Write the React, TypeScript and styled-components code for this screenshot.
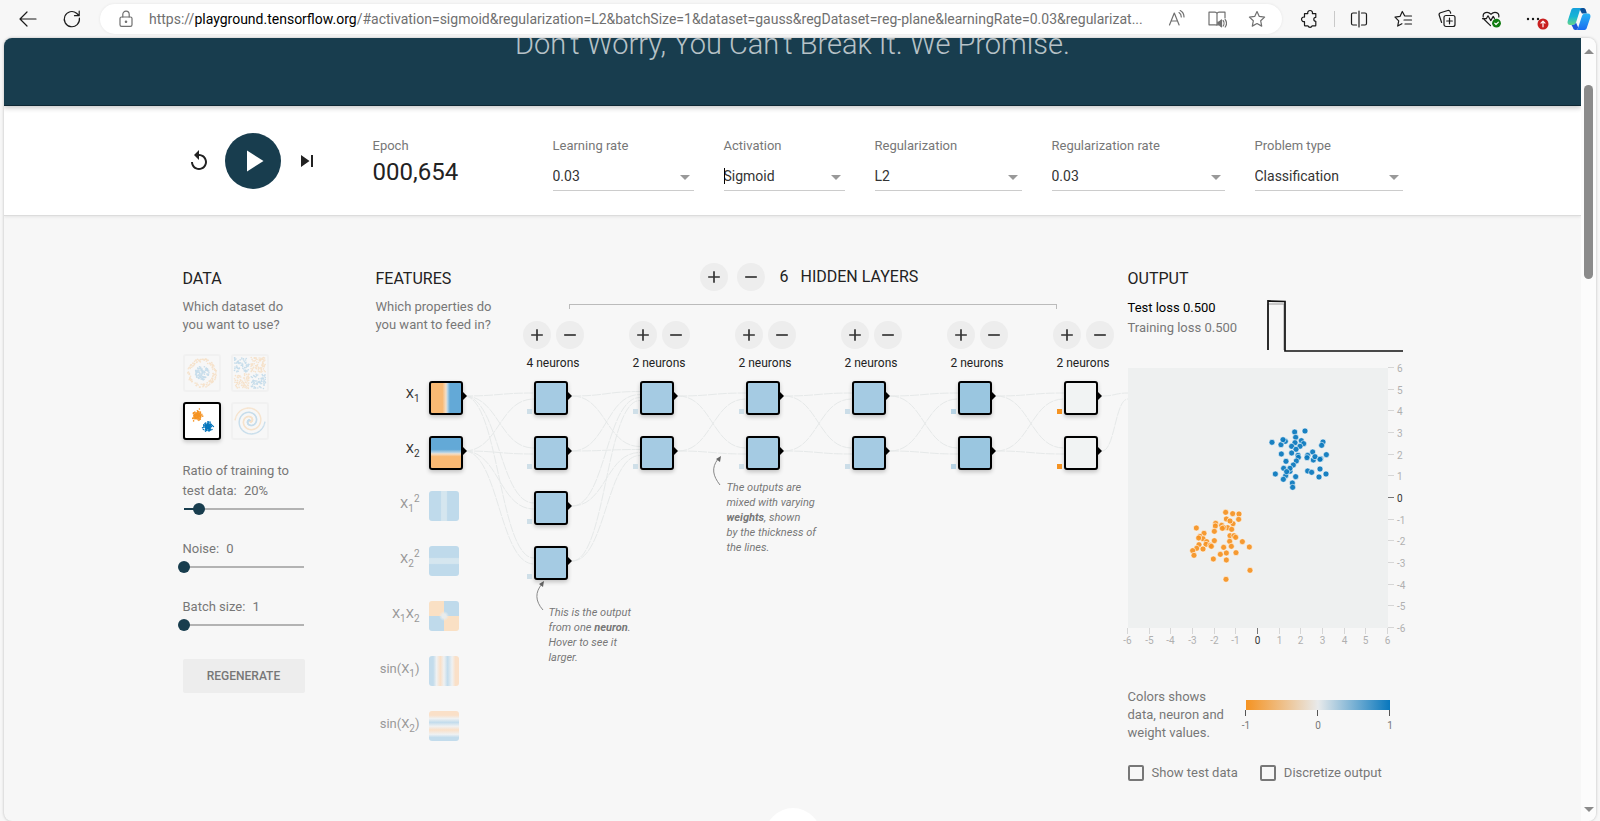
import React from 'react';
import styled, { createGlobalStyle, css } from 'styled-components';

const NAVY = '#183d4e';
const ORANGE = '#f59322';
const BLUE = '#0877bd';

const GlobalStyle = createGlobalStyle`
  * { box-sizing: border-box; }
  body {
    margin: 0;
    background: #f7f7f7;
    color: #222;
    font-family: Roboto, "Liberation Sans", sans-serif;
    font-size: 13px;
    line-height: 18px;
  }
  h1, h2, p { margin: 0; font-weight: 400; }
  button, input, select { font-family: inherit; margin: 0; }
`;

/* ---------- browser frame ---------- */

const Window = styled.div`
  display: flex;
  flex-direction: column;
  height: 100vh;
  overflow: hidden;
`;

const Toolbar = styled.div`
  display: flex;
  align-items: center;
  flex: none;
  height: 38px;
  padding: 0 9px 0 16px;
`;

const ToolButton = styled.button`
  position: relative;
  display: flex;
  align-items: center;
  justify-content: center;
  flex: none;
  width: 24px;
  height: 24px;
  padding: 0;
  border: 0;
  background: none;
  color: #1b1b1b;

  svg { fill: none; stroke: currentColor; stroke-width: 1.2; stroke-linecap: round; stroke-linejoin: round; }
`;

const NavTools = styled.div`
  display: flex;
  gap: 20px;
  margin-right: 16px;
`;

const AddressBar = styled.div`
  display: flex;
  align-items: center;
  flex: 1;
  min-width: 0;
  height: 30px;
  padding: 0 13px 0 14px;
  border-radius: 15px;
  background: #fff;
  box-shadow: 0 0 3px rgba(0, 0, 0, 0.08);

  ${ToolButton} { color: #707070; }
`;

const Url = styled.div`
  flex: 1;
  min-width: 0;
  margin: 0 8px 0 11px;
  overflow: hidden;
  white-space: nowrap;
  font-size: 14px;
  line-height: 20px;
  color: #707070;

  b { font-weight: 400; color: #000; }
`;

const AddressTools = styled.div`
  display: flex;
  gap: 16px;
`;

const BrowserTools = styled.div`
  display: flex;
  align-items: center;
  gap: 20px;
  margin-left: 16px;
`;

const ToolDivider = styled.span`
  width: 1px;
  height: 16px;
  margin: 0 -8px;
  background: #c9c9c9;
`;

const Viewport = styled.div`
  display: flex;
  flex: 1;
  min-height: 0;
  margin: 0 4px;
  border-radius: 8px;
  overflow: hidden;
  box-shadow: 0 0 3px rgba(0, 0, 0, 0.25);
`;

const Page = styled.div`
  flex: 1;
  min-width: 0;
  overflow: hidden;
`;

const ScrollBar = styled.div`
  display: flex;
  flex-direction: column;
  align-items: center;
  width: 15px;
  padding: 11px 0 9px;
  background: #fcfcfc;
`;

const ScrollArrow = styled.span<{ $down?: boolean }>`
  border: 5px solid transparent;
  ${(p) =>
    p.$down
      ? css`margin-top: auto; border-top-color: #8b8b8b; border-bottom: 0;`
      : css`border-bottom-color: #8b8b8b; border-top: 0;`}
`;

const ScrollThumb = styled.span`
  width: 9px;
  height: 194px;
  margin-top: 31px;
  border-radius: 5px;
  background: #8b8b8b;
`;

/* ---------- page header and top controls ---------- */

const Banner = styled.header`
  position: relative;
  display: flow-root;
  height: 68px;
  background: ${NAVY};
  border-bottom: 1px solid #0d2733;
  box-shadow: 0 2px 5px rgba(0, 0, 0, 0.22);
  color: rgba(255, 255, 255, 0.7);
  text-align: center;

  h1 {
    margin-top: -12px;
    font-size: 29px;
    font-weight: 300;
    line-height: 36px;
  }
`;

const Container = styled.div`
  display: flex;
  max-width: 1220px;
  margin: 0 auto;
`;

const ControlBar = styled.div`
  background: #fff;
  border-bottom: 1px solid #dcdcdc;
  box-shadow: 0 1px 3px rgba(0, 0, 0, 0.08);
`;

const ControlRow = styled(Container)`
  height: 109px;
  padding-top: 31px;
`;

const Timeline = styled.div`
  display: flex;
  align-items: center;
  align-self: flex-start;
  gap: 14px;
  width: 190px;
  height: 48px;
  padding-left: 4px;
`;

const IconButton = styled.button`
  display: flex;
  padding: 0;
  border: 0;
  background: none;
  fill: #222;
`;

const PlayButton = styled(IconButton)`
  align-items: center;
  justify-content: center;
  width: 56px;
  height: 56px;
  border-radius: 50%;
  background: ${NAVY};
  fill: #fff;
`;

const Epoch = styled.div`
  width: 180px;
  color: #777;

  output {
    display: block;
    margin-top: 3px;
    font-size: 24px;
    line-height: 28px;
    color: #222;
  }
`;

const Controls = styled.div`
  display: flex;
  flex: 1;
  gap: 30px;
`;

const Control = styled.label<{ $share: number }>`
  flex: ${(p) => p.$share} 1 0;
  color: #777;
`;

const SelectBox = styled.span<{ $caret?: boolean }>`
  position: relative;
  display: block;
  margin-top: 9px;

  &::after {
    content: "";
    position: absolute;
    right: 4px;
    top: 11px;
    border: 5px solid transparent;
    border-top-color: #999;
    border-bottom: 0;
  }
  ${(p) =>
    p.$caret &&
    css`
      &::before {
        content: "";
        position: absolute;
        left: 0;
        top: 4px;
        width: 1px;
        height: 16px;
        background: #000;
      }
    `}
`;

const Select = styled.select`
  display: block;
  width: 100%;
  height: 27px;
  padding: 0 20px 2px 0;
  border: 0;
  border-bottom: 1px solid #ccc;
  border-radius: 0;
  background: none;
  appearance: none;
  font-size: 14px;
  color: #333;
`;

/* ---------- main columns ---------- */

const Main = styled(Container)`
  padding-top: 47px;
`;

const Column = styled.section`
  padding-top: 6px;
`;

const Heading = styled.h2`
  font-size: 16px;
  line-height: 20px;
  text-transform: uppercase;
`;

const Intro = styled.p`
  max-width: 120px;
  margin-top: 9px;
  color: #777;
`;

const DataColumn = styled(Column)`
  width: 122px;
  margin-right: 71px;
  color: #777;

  ${Heading} { color: #222; }
`;

const Datasets = styled.div`
  display: grid;
  grid-template-columns: 38px 38px;
  gap: 10px;
  margin: 20px 0 21px;
`;

const Dataset = styled.button<{ $active?: boolean }>`
  display: block;
  height: 38px;
  padding: 0;
  border: 2px solid ${(p) => (p.$active ? '#000' : '#f1f1f1')};
  border-radius: 3px;
  background: ${(p) => (p.$active ? '#fff' : '#f7f7f7')};
  box-shadow: ${(p) => (p.$active ? '0 2px 4px rgba(0,0,0,0.2)' : 'none')};

  svg { display: block; opacity: ${(p) => (p.$active ? 1 : 0.2)}; }
`;

const SliderField = styled.label`
  display: block;
  margin-bottom: 22px;
  line-height: 20px;
`;

const SliderValue = styled.span`
  margin-left: 4px;
`;

const Slider = styled.input<{ $fill: number }>`
  display: block;
  width: 132px;
  height: 16px;
  margin-left: -5px;
  background: linear-gradient(to right, ${NAVY} ${(p) => p.$fill}%, #b3b3b3 ${(p) => p.$fill}%) center / 120px 2px no-repeat;
  appearance: none;

  &::-webkit-slider-thumb {
    width: 12px;
    height: 12px;
    border-radius: 50%;
    background: ${NAVY};
    appearance: none;
  }
`;

const Regenerate = styled.button`
  display: block;
  width: 100%;
  height: 34px;
  margin-top: 26px;
  border: 0;
  border-radius: 2px;
  background: #ededed;
  font-size: 12px;
  font-weight: 500;
  color: #777;
`;

const Network = styled.section`
  position: relative;
  display: flex;
  flex: none;
  margin-right: 14px;
`;

const Links = styled.svg`
  position: absolute;
  left: 0;
  top: 0;
  overflow: visible;
  pointer-events: none;
  fill: none;
`;

const Features = styled(Column)`
  width: 147px;
`;

const FeatureList = styled.div`
  display: flex;
  flex-direction: column;
  gap: 21px;
  margin-top: 47px;
`;

const Feature = styled.div<{ $active?: boolean }>`
  display: flex;
  align-items: flex-start;
  height: 34px;
  color: ${(p) => (p.$active ? '#333' : '#999')};

  span { width: 44px; margin: 4px 9px 0 0; text-align: right; white-space: nowrap; }
  sub, sup { font-size: 10px; line-height: 0; }
  sub { vertical-align: -4px; }
  sup { vertical-align: 6px; }
`;

const FeatureTile = styled.button<{ $fill: string }>`
  width: 30px;
  height: 30px;
  padding: 0;
  border: 0;
  border-radius: 3px;
  background: ${(p) => p.$fill};
`;

const Node = styled.button<{ $fill: string; $bias?: string }>`
  position: relative;
  display: block;
  width: 34px;
  height: 34px;
  padding: 0;
  border: 2px solid #000;
  border-radius: 3px;
  background: ${(p) => p.$fill} padding-box;
  box-shadow: 0 2px 4px rgba(0, 0, 0, 0.22);

  &::after {
    content: "";
    position: absolute;
    left: 32px;
    top: 9px;
    border: 4px solid transparent;
    border-left: 4px solid #000;
    border-right: 0;
  }
  ${(p) =>
    p.$bias &&
    css`
      &::before {
        content: "";
        position: absolute;
        left: -9px;
        top: 26px;
        width: 5px;
        height: 5px;
        background: ${p.$bias};
      }
    `}
`;

const Hidden = styled.div`
  width: 591px;
`;

const LayerTitle = styled.div`
  display: flex;
  align-items: center;
  padding-left: 177px;

  ${Heading}:first-of-type { margin-left: 15px; }
  ${Heading} + ${Heading} { margin-left: 12px; }
`;

const RoundButton = styled.button`
  display: flex;
  align-items: center;
  justify-content: center;
  width: 28px;
  height: 28px;
  padding: 0;
  border: 0;
  border-radius: 50%;
  background: #ededed;
  fill: #333;

  & + & { margin-left: 9px; }
`;

const Bracket = styled.div`
  height: 5px;
  margin: 13px 57px 12px 46px;
  border: 1px solid #bbb;
  border-bottom: 0;
`;

const Layers = styled.div`
  display: flex;
  justify-content: space-between;
`;

const Layer = styled.div`
  width: 61px;

  p { margin: 7px 0 11px; font-size: 12px; line-height: 14px; text-align: center; }
`;

const LayerButtons = styled.div`
  display: flex;

  ${RoundButton} + ${RoundButton} { margin-left: 5px; }
`;

const Nodes = styled.div`
  display: flex;
  flex-direction: column;
  gap: 21px;
  padding-left: 11px;
`;

const Callout = styled.p<{ $x: number; $y: number; $w: number }>`
  position: absolute;
  left: ${(p) => p.$x}px;
  top: ${(p) => p.$y}px;
  width: ${(p) => p.$w}px;
  font-size: 11px;
  font-style: italic;
  line-height: 15px;
  color: #777;
`;

const OutputColumn = styled(Column)`
  flex: 1;
  min-width: 275px;
  color: #777;

  ${Heading} { color: #222; }
`;

const LossRow = styled.div`
  display: flex;
  justify-content: space-between;
  margin: 9px 0 16px;
  line-height: 20px;

  p:first-child { color: #000; }
  svg { display: block; }
`;

const Plot = styled.svg`
  display: block;
  overflow: visible;
  font-size: 10px;
  fill: #b0b0b0;
`;

const Legend = styled.div`
  display: flex;
  margin-top: 38px;

  p { width: 112px; }
  svg { display: block; margin-top: 12px; font-size: 10px; fill: #777; }
`;

const Options = styled.div`
  display: flex;
  gap: 22px;
  margin-top: 22px;
`;

const Option = styled.label`
  display: flex;
  align-items: center;
  gap: 8px;
  white-space: nowrap;
`;

const Checkbox = styled.input`
  width: 16px;
  height: 16px;
  border: 2px solid #777;
  border-radius: 2px;
  appearance: none;
`;

const More = styled.button`
  display: flex;
  align-items: center;
  justify-content: center;
  width: 56px;
  height: 56px;
  margin: 26px auto 0;
  border: 0;
  border-radius: 50%;
  background: #fff;
  fill: #999;
`;

/* ---------- data ---------- */

function seeded(seed: number) {
  let s = seed;
  return () => {
    s = (s * 16807) % 2147483647;
    return s / 2147483647;
  };
}

type Dot = { x: number; y: number; c: string };

function circleDots(): Dot[] {
  const r = seeded(7);
  return Array.from({ length: 230 }, (_, i) => {
    const inner = i < 100;
    const d = inner ? Math.sqrt(r()) * 7 : 11 + r() * 3.5;
    const a = r() * Math.PI * 2;
    return { x: 17 + d * Math.cos(a), y: 17 + d * Math.sin(a), c: inner ? BLUE : ORANGE };
  });
}

function xorDots(): Dot[] {
  const r = seeded(11);
  return Array.from({ length: 300 }, () => {
    const x = (r() - 0.5) * 29;
    const y = (r() - 0.5) * 29;
    return { x: 17 + x + Math.sign(x), y: 17 + y + Math.sign(y), c: x * y > 0 ? BLUE : ORANGE };
  });
}

function gaussDots(): Dot[] {
  const r = seeded(5);
  const g = () => (r() + r() + r() - 1.5) * 4.6;
  return Array.from({ length: 200 }, (_, i) =>
    i % 2 ? { x: 12.5 + g(), y: 11.5 + g(), c: ORANGE } : { x: 23 + g(), y: 23 + g(), c: BLUE },
  );
}

function spiralDots(): Dot[] {
  return Array.from({ length: 240 }, (_, i) => {
    const k = Math.floor(i / 2) / 120;
    const a = 1.75 * k * 2 * Math.PI + (i % 2 ? Math.PI : 0);
    return { x: 17 + 15 * k * Math.sin(a), y: 17 + 15 * k * Math.cos(a), c: i % 2 ? BLUE : ORANGE };
  });
}

const DATASETS = [
  { name: 'Circle', dots: circleDots() },
  { name: 'Exclusive or', dots: xorDots() },
  { name: 'Gaussian', dots: gaussDots(), active: true },
  { name: 'Spiral', dots: spiralDots() },
];

const CONTROLS = [
  { label: 'Learning rate', value: '0.03', share: 141 },
  { label: 'Activation', value: 'Sigmoid', share: 121, caret: true },
  { label: 'Regularization', value: 'L2', share: 147 },
  { label: 'Regularization rate', value: '0.03', share: 173 },
  { label: 'Problem type', value: 'Classification', share: 148 },
];

const PALE_BLUE = '#bfdaeb';
const PALE_ORANGE = '#fae0c4';

const FEATURES: { name: string; label: React.ReactNode; fill: string; active?: boolean }[] = [
  { name: 'X1', label: <>X<sub>1</sub></>, active: true, fill: 'linear-gradient(to right, #f9b973 38%, #f3dfc9 50%, #b5d3e6 55%, #63a9d7 63%)' },
  { name: 'X2', label: <>X<sub>2</sub></>, active: true, fill: 'linear-gradient(to bottom, #63a9d7 38%, #b5d3e6 48%, #f3dfc9 53%, #f9b973 62%)' },
  { name: 'X1 squared', label: <>X<sub>1</sub><sup>2</sup></>, fill: `linear-gradient(to right, ${PALE_BLUE} 38%, #d5e6ef 42% 58%, ${PALE_BLUE} 62%)` },
  { name: 'X2 squared', label: <>X<sub>2</sub><sup>2</sup></>, fill: `linear-gradient(to bottom, ${PALE_BLUE} 38%, #d5e6ef 42% 58%, ${PALE_BLUE} 62%)` },
  { name: 'X1 times X2', label: <>X<sub>1</sub>X<sub>2</sub></>, fill: `radial-gradient(circle, #e9ecec 2px, transparent 5px), conic-gradient(${PALE_BLUE} 25%, ${PALE_ORANGE} 25% 50%, ${PALE_BLUE} 50% 75%, ${PALE_ORANGE} 75%)` },
  { name: 'sin of X1', label: <>sin(X<sub>1</sub>)</>, fill: 'linear-gradient(to right, #c3dcec 14%, #eff1f2 25%, #fae0c8 38%, #eff1f2 50%, #c3dcec 62%, #eff1f2 77%, #fae0c8 88%)' },
  { name: 'sin of X2', label: <>sin(X<sub>2</sub>)</>, fill: 'linear-gradient(to bottom, #fae0c8 14%, #eff1f2 25%, #c3dcec 38%, #eff1f2 51%, #fae0c8 63%, #eff1f2 78%, #c3dcec 88%)' },
];

const LAYERS = [
  { count: 4, fill: '#a5cbe3', bias: '#cfdfe8' },
  { count: 2, fill: '#a5cbe3', bias: '#cfdfe8' },
  { count: 2, fill: '#a5cbe3', bias: '#cfdfe8' },
  { count: 2, fill: '#a5cbe3', bias: '#cbdde8' },
  { count: 2, fill: '#9ac6e0', bias: '#b7d3e4' },
  { count: 2, fill: '#f1f3f3', bias: ORANGE },
];

/* Curves run from the right side of each node to the left side of the next layer. */
const NODE_PITCH = 55;
const FIRST_NODE_Y = 133;
const LAYER_PITCH = 106;
const layerX = (i: number) => 158 + i * LAYER_PITCH;

const LINKS: string[] = [];
[2, ...LAYERS.map((l) => l.count)].forEach((count, i) => {
  const startX = i === 0 ? 88 : layerX(i - 1) + 38;
  const last = i === LAYERS.length;
  const endX = last ? 752 : layerX(i);
  const targets = last ? 1 : LAYERS[i].count;
  for (let s = 0; s < count; s++) {
    for (let t = 0; t < targets; t++) {
      const y1 = FIRST_NODE_Y + s * NODE_PITCH;
      const y2 = FIRST_NODE_Y + t * NODE_PITCH + ((s - (count - 1) / 2) / count) * 12;
      const mid = (startX + endX) / 2;
      LINKS.push(`M${startX} ${y1}C${mid} ${y1} ${mid} ${y2} ${endX} ${y2}`);
    }
  }
});

/* Sample positions on a 780 x 780 plot area. */
const BLUE_POINTS = [
  [432, 223], [459, 230], [472, 220], [465, 215], [500, 192], [531, 189], [503, 208], [520, 218], [527, 227], [501, 224],
  [516, 235], [491, 235], [504, 244], [491, 255], [510, 262], [511, 268], [505, 279], [496, 291], [474, 280], [486, 310],
  [486, 301], [473, 323], [467, 301], [476, 311], [442, 318], [466, 334], [503, 326], [493, 345], [494, 358], [585, 222],
  [581, 232], [595, 260], [554, 252], [539, 262], [537, 269], [556, 276], [561, 266], [578, 272], [576, 274], [576, 303],
  [539, 309], [551, 313], [573, 327], [594, 318], [460, 258],
];
const ORANGE_POINTS = [
  [293, 433], [314, 437], [333, 438], [332, 454], [295, 453], [315, 467], [306, 459], [263, 466], [262, 474], [281, 472],
  [299, 479], [287, 479], [283, 481], [311, 484], [205, 480], [228, 496], [259, 490], [216, 505], [225, 512], [212, 510],
  [306, 503], [318, 503], [323, 508], [305, 520], [343, 521], [259, 518], [236, 521], [234, 529], [247, 532], [250, 535],
  [213, 530], [206, 541], [194, 548], [198, 562], [225, 543], [287, 538], [310, 535], [364, 537], [324, 554], [295, 555],
  [277, 559], [256, 573], [295, 576], [366, 607], [294, 634],
];

const TICKS = Array.from({ length: 13 }, (_, i) => i - 6);

/* ---------- drawings ---------- */

const Plus = () => (
  <svg width="20" height="20" viewBox="0 0 24 24"><path d="M19 13h-6v6h-2v-6H5v-2h6V5h2v6h6v2z" /></svg>
);
const Minus = () => (
  <svg width="20" height="20" viewBox="0 0 24 24"><path d="M19 13H5v-2h14v2z" /></svg>
);

const STAR = 'M10 2.500l2.300 4.900 5.300.7-3.900 3.700 1 5.300-4.700-2.600-4.700 2.600 1-5.300L2.400 8.100l5.300-.7z';

function Icon({ children, size = 20 }: { children: React.ReactNode; size?: number }) {
  return <svg width={size} height={size} viewBox="0 0 20 20">{children}</svg>;
}

function BrowserToolbar() {
  return (
    <Toolbar>
      <NavTools>
        <ToolButton aria-label="Back"><Icon><path d="M18 10H2.500M9 3L2 10l7 7" /></Icon></ToolButton>
        <ToolButton aria-label="Refresh"><Icon><path d="M17.400 9.200A7.600 7.600 0 1 1 14.600 4.200L17 6.500M17.200 2v4.700h-4.700" /></Icon></ToolButton>
      </NavTools>
      <AddressBar>
        <ToolButton aria-label="Site information">
          <Icon><rect x="4" y="8" width="12" height="9.4" rx="1.6" /><path d="M6.800 8V5.400a3.200 3.200 0 0 1 6.400 0V8" /><circle cx="10" cy="12.7" r=".7" fill="currentColor" /></Icon>
        </ToolButton>
        <Url>
          https://<b>playground.tensorflow.org</b>/#activation=sigmoid&amp;regularization=L2&amp;batchSize=1&amp;dataset=gauss&amp;regDataset=reg-plane&amp;learningRate=0.03&amp;regularizat...
        </Url>
        <AddressTools>
          <ToolButton aria-label="Read aloud">
            <Icon><path d="M2.500 16L7.300 4l4.800 12M4.200 12h6.200M12 3.600a5 5 0 0 1 2.300 4.400M13.200 1.600A7.400 7.400 0 0 1 17 8" /></Icon>
          </ToolButton>
          <ToolButton aria-label="Immersive reader">
            <Icon><path d="M10 4.400V16M10 4.400C9.600 3.600 9 3.200 8 3.200H2v12.600h6.200c1 0 1.800.4 1.800.4M10 4.400c.4-.8 1-1.200 2-1.200h6V9M16.200 11.600c1 1.300 1 4 0 5.400M18.200 10.600c1.600 2.200 1.600 5.200 0 7.400" /><path d="M14.500 11v6.800l-2.300-2h-1.400v-2.800h1.400z" fill="currentColor" /></Icon>
          </ToolButton>
          <ToolButton aria-label="Add to favorites"><Icon><path d={STAR} /></Icon></ToolButton>
        </AddressTools>
      </AddressBar>
      <BrowserTools>
        <ToolButton aria-label="Extensions">
          <Icon><path d="M4.500 4.600h3.300a2.400 2.400 0 1 1 4.600 0h3.400v3.700a2 2 0 0 0 0 4v3.900c0 .4-.2.600-.6.600h-3a2.300 2.300 0 0 1-4.300 0H5.100c-.4 0-.6-.2-.6-.6v-3.700a2.300 2.300 0 1 1 0-4.400z" /></Icon>
        </ToolButton>
        <ToolDivider />
        <ToolButton aria-label="Split screen">
          <Icon><path d="M10 2v16M7.500 4H4a1.500 1.500 0 0 0-1.500 1.500v9A1.500 1.500 0 0 0 4 16h3.500M12.500 4H16a1.500 1.500 0 0 1 1.500 1.500v9A1.500 1.500 0 0 1 16 16h-3.500" /></Icon>
        </ToolButton>
        <ToolButton aria-label="Favorites">
          <Icon><path d="M11.600 6.800L9.300 2.500 7 7.400l-5 .7 3.700 3.700-1 5.300 4.200-2.400M12 7h6.500M11 11h7.500M12 15h6.500" /></Icon>
        </ToolButton>
        <ToolButton aria-label="Collections">
          <Icon><rect x="7" y="6.500" width="11" height="11" rx="2" /><path d="M12.500 9.200v5.600M9.700 12h5.600M4.600 13.500L2.200 6.200A2 2 0 0 1 3.500 3.700l7.300-2.200a2 2 0 0 1 2.500 1.400l.4 1.300" /></Icon>
        </ToolButton>
        <ToolButton aria-label="Browser essentials">
          <Icon>
            <path d="M3 10.200L9.500 16.600M2.200 8C1.500 3.500 6.500 1.800 10 5.200c3.500-3.400 8.500-1.700 7.800 2.800M1.500 9.700h3.800l1.700-2.900 2.800 4.800 2.400-4.200 1.200 2" />
            <circle cx="15.500" cy="14.200" r="4.400" fill="#107c10" stroke="none" /><path d="M13.700 14.200l1.300 1.300 2.400-2.400" stroke="#fff" />
          </Icon>
        </ToolButton>
        <ToolButton aria-label="Settings and more">
          <svg width="24" height="24" viewBox="0 0 24 24" overflow="visible">
            <path d="M5 12h0M10 12h0M15 12h0" strokeWidth="2.400" />
            <circle cx="20" cy="17" r="5.500" fill="#c92020" stroke="none" /><path d="M20 19.800v-5.400M18 16.200l2-2 2 2" stroke="#fff" />
          </svg>
        </ToolButton>
        <ToolButton aria-label="Copilot">
          <svg width="24" height="24" viewBox="0 0 24 24">
            <defs>
              <linearGradient id="cpA" x1="0" y1="0" x2="0" y2="1"><stop offset="0" stopColor="#16a0dc" /><stop offset=".5" stopColor="#16b5d5" /><stop offset="1" stopColor="#63d48c" /></linearGradient>
              <linearGradient id="cpB" x1="0" y1="0" x2="0" y2="1"><stop offset="0" stopColor="#27b4f5" /><stop offset="1" stopColor="#1a6cf0" /></linearGradient>
            </defs>
            <g style={{ stroke: 'none' }}>
              <path d="M12 1h4.500c1.400 0 2 1 2.400 2.200l1 3.300h-5z" fill="#0b4e97" />
              <path d="M6.500 1h9c-1.500 0-2.200 1-2.700 2.600L9.200 15c-.6 2-1.500 3-3.600 3H3.200C.8 18 .1 16.200.7 14L4 3.800C4.500 2 5.200 1 6.500 1z" fill="url(#cpA)" />
              <path d="M4.500 18h1.100c1.800 0 2.800-.8 3.400-2.400l2.200 4.800C10.500 22.300 9.800 23 8.500 23c-1.500 0-2.100-1-2.500-2.300z" fill="#1b58d8" />
              <path d="M17.500 23h-9c1.500 0 2.200-1 2.700-2.600L14.800 9.500c.6-2 1.500-3 3.600-3h2.400c2.400 0 3.100 1.800 2.500 4L20 20.200c-.5 1.800-1.200 2.800-2.500 2.800z" fill="url(#cpB)" />
            </g>
          </svg>
        </ToolButton>
      </BrowserTools>
    </Toolbar>
  );
}

function LossChart() {
  return (
    <svg width="136" height="54" viewBox="0 0 136 54" fill="none" role="img" aria-label="Loss over time">
      <path d="M1 52V6h16v46" stroke="#999" />
      <path d="M1 52V3l17 .500V53h118" stroke="#111" strokeWidth="1.700" />
    </svg>
  );
}

function OutputPlot() {
  return (
    <Plot width="275" height="282" role="img" aria-label="Decision boundary">
      <rect width="260" height="260" fill="#eef0f0" />
      {TICKS.map((t) => {
        const p = Math.round(130 + (t * 260) / 12) - 0.5;
        const stroke = t === 0 ? '#777' : '#d6d6d6';
        const fill = t === 0 ? '#333' : undefined;
        return (
          <g key={t}>
            <path d={`M${p} 260v6M260 ${p}h6`} stroke={stroke} />
            <text x={p} y="276" textAnchor="middle" fill={fill}>{t}</text>
            <text x="269" y={p + 4} fill={fill}>{t === 0 ? 0 : -t}</text>
          </g>
        );
      })}
      <g transform="scale(0.33333)" stroke="#fff" strokeWidth="2" strokeOpacity="0.9" fillOpacity="0.92">
        {BLUE_POINTS.map(([x, y], i) => <circle key={i} cx={x} cy={y} r="9" fill={BLUE} />)}
        {ORANGE_POINTS.map(([x, y], i) => <circle key={i} cx={x} cy={y} r="9" fill={ORANGE} />)}
      </g>
    </Plot>
  );
}

function ColorScale() {
  return (
    <svg width="163" height="34" viewBox="0 0 163 34" role="img" aria-label="Color scale">
      <defs>
        <linearGradient id="scale"><stop offset="0" stopColor={ORANGE} /><stop offset=".5" stopColor="#e8eaeb" /><stop offset="1" stopColor={BLUE} /></linearGradient>
      </defs>
      <rect x="6" width="144" height="10" fill="url(#scale)" />
      {[-1, 0, 1].map((v) => (
        <g key={v}>
          <path d={`M${77.5 + v * 72} 10v6`} stroke="#555" />
          <text x={78 + v * 72} y="29" textAnchor="middle">{v}</text>
        </g>
      ))}
    </svg>
  );
}

/* ---------- page ---------- */

export default function App() {
  return (
    <Window>
      <GlobalStyle />
      <BrowserToolbar />
      <Viewport>
        <Page>
          <Banner><h1>Don’t Worry, You Can’t Break It. We Promise.</h1></Banner>
          <ControlBar>
            <ControlRow>
              <Timeline>
                <IconButton aria-label="Reset">
                  <svg width="24" height="24" viewBox="0 0 24 24"><path d="M12 5V1L7 6l5 5V7c3.310 0 6 2.690 6 6s-2.690 6-6 6-6-2.690-6-6H4c0 4.420 3.580 8 8 8s8-3.580 8-8-3.580-8-8-8z" /></svg>
                </IconButton>
                <PlayButton aria-label="Play">
                  <svg width="36" height="36" viewBox="0 0 24 24"><path d="M8 5v14l11-7z" /></svg>
                </PlayButton>
                <IconButton aria-label="Step">
                  <svg width="24" height="24" viewBox="0 0 24 24"><path d="M6 18l8.500-6L6 6v12zM16 6v12h2V6h-2z" /></svg>
                </IconButton>
              </Timeline>
              <Epoch>Epoch<output>000,654</output></Epoch>
              <Controls>
                {CONTROLS.map((c) => (
                  <Control key={c.label} $share={c.share}>
                    {c.label}
                    <SelectBox $caret={c.caret}>
                      <Select defaultValue={c.value}><option>{c.value}</option></Select>
                    </SelectBox>
                  </Control>
                ))}
              </Controls>
            </ControlRow>
          </ControlBar>

          <Main as="main">
            <DataColumn>
              <Heading>Data</Heading>
              <Intro>Which dataset do<br />you want to use?</Intro>
              <Datasets>
                {DATASETS.map((d) => (
                  <Dataset key={d.name} aria-label={d.name} $active={d.active}>
                    <svg width="34" height="34">
                      {d.dots.map((p, i) => <circle key={i} cx={p.x} cy={p.y} r=".8" fill={p.c} />)}
                    </svg>
                  </Dataset>
                ))}
              </Datasets>
              <SliderField>
                Ratio of training to<br />test data: <SliderValue>20%</SliderValue>
                <Slider type="range" min={10} max={90} step={10} defaultValue={20} $fill={12.5} />
              </SliderField>
              <SliderField>
                Noise: <SliderValue>0</SliderValue>
                <Slider type="range" min={0} max={50} defaultValue={0} $fill={0} />
              </SliderField>
              <SliderField>
                Batch size: <SliderValue>1</SliderValue>
                <Slider type="range" min={1} max={30} defaultValue={1} $fill={0} />
              </SliderField>
              <Regenerate>REGENERATE</Regenerate>
            </DataColumn>

            <Network>
              <Links width="752" height="500">
                <g stroke="#e6e9e9" strokeDasharray="9 1">
                  {LINKS.map((d) => <path key={d} d={d} />)}
                </g>
                <g stroke="#888" strokeWidth="1">
                  <path d="M344 222C337 213 335 205 342 196" />
                  <path d="M167 347C159 338 159 329 166 321" />
                </g>
                <path d="M345 193l-1 6-4-3zM168 318l-1 6-4-3z" fill="#666" />
              </Links>

              <Features>
                <Heading>Features</Heading>
                <Intro>Which properties do<br />you want to feed in?</Intro>
                <FeatureList>
                  {FEATURES.map((f) => (
                    <Feature key={f.name} $active={f.active}>
                      <span>{f.label}</span>
                      {f.active
                        ? <Node $fill={f.fill} aria-label={f.name} />
                        : <FeatureTile $fill={f.fill} aria-label={f.name} />}
                    </Feature>
                  ))}
                </FeatureList>
              </Features>

              <Hidden>
                <LayerTitle>
                  <RoundButton aria-label="Add layer"><Plus /></RoundButton>
                  <RoundButton aria-label="Remove layer"><Minus /></RoundButton>
                  <Heading>6</Heading>
                  <Heading>Hidden layers</Heading>
                </LayerTitle>
                <Bracket />
                <Layers>
                  {LAYERS.map((l, i) => (
                    <Layer key={i}>
                      <LayerButtons>
                        <RoundButton aria-label="Add neuron"><Plus /></RoundButton>
                        <RoundButton aria-label="Remove neuron"><Minus /></RoundButton>
                      </LayerButtons>
                      <p>{l.count} neurons</p>
                      <Nodes>
                        {Array.from({ length: l.count }, (_, n) => (
                          <Node key={n} $fill={l.fill} $bias={l.bias} aria-label={`Neuron ${n + 1}`} />
                        ))}
                      </Nodes>
                    </Layer>
                  ))}
                </Layers>
              </Hidden>

              <Callout $x={351} $y={217} $w={100}>
                The outputs are<br />mixed with varying<br /><b>weights</b>, shown<br />by the thickness of<br />the lines.
              </Callout>
              <Callout $x={173} $y={342} $w={100}>
                This is the output<br />from one <b>neuron</b>.<br />Hover to see it<br />larger.
              </Callout>
            </Network>

            <OutputColumn>
              <Heading>Output</Heading>
              <LossRow>
                <div>
                  <p>Test loss 0.500</p>
                  <p>Training loss 0.500</p>
                </div>
                <LossChart />
              </LossRow>
              <OutputPlot />
              <Legend>
                <p>Colors shows<br />data, neuron and<br />weight values.</p>
                <ColorScale />
              </Legend>
              <Options>
                <Option><Checkbox type="checkbox" />Show test data</Option>
                <Option><Checkbox type="checkbox" />Discretize output</Option>
              </Options>
            </OutputColumn>
          </Main>
          <More aria-label="More">
            <svg width="24" height="24" viewBox="0 0 24 24"><path d="M16.600 8.600L12 13.200 7.400 8.600 6 10l6 6 6-6z" /></svg>
          </More>
        </Page>
        <ScrollBar>
          <ScrollArrow />
          <ScrollThumb />
          <ScrollArrow $down />
        </ScrollBar>
      </Viewport>
    </Window>
  );
}
